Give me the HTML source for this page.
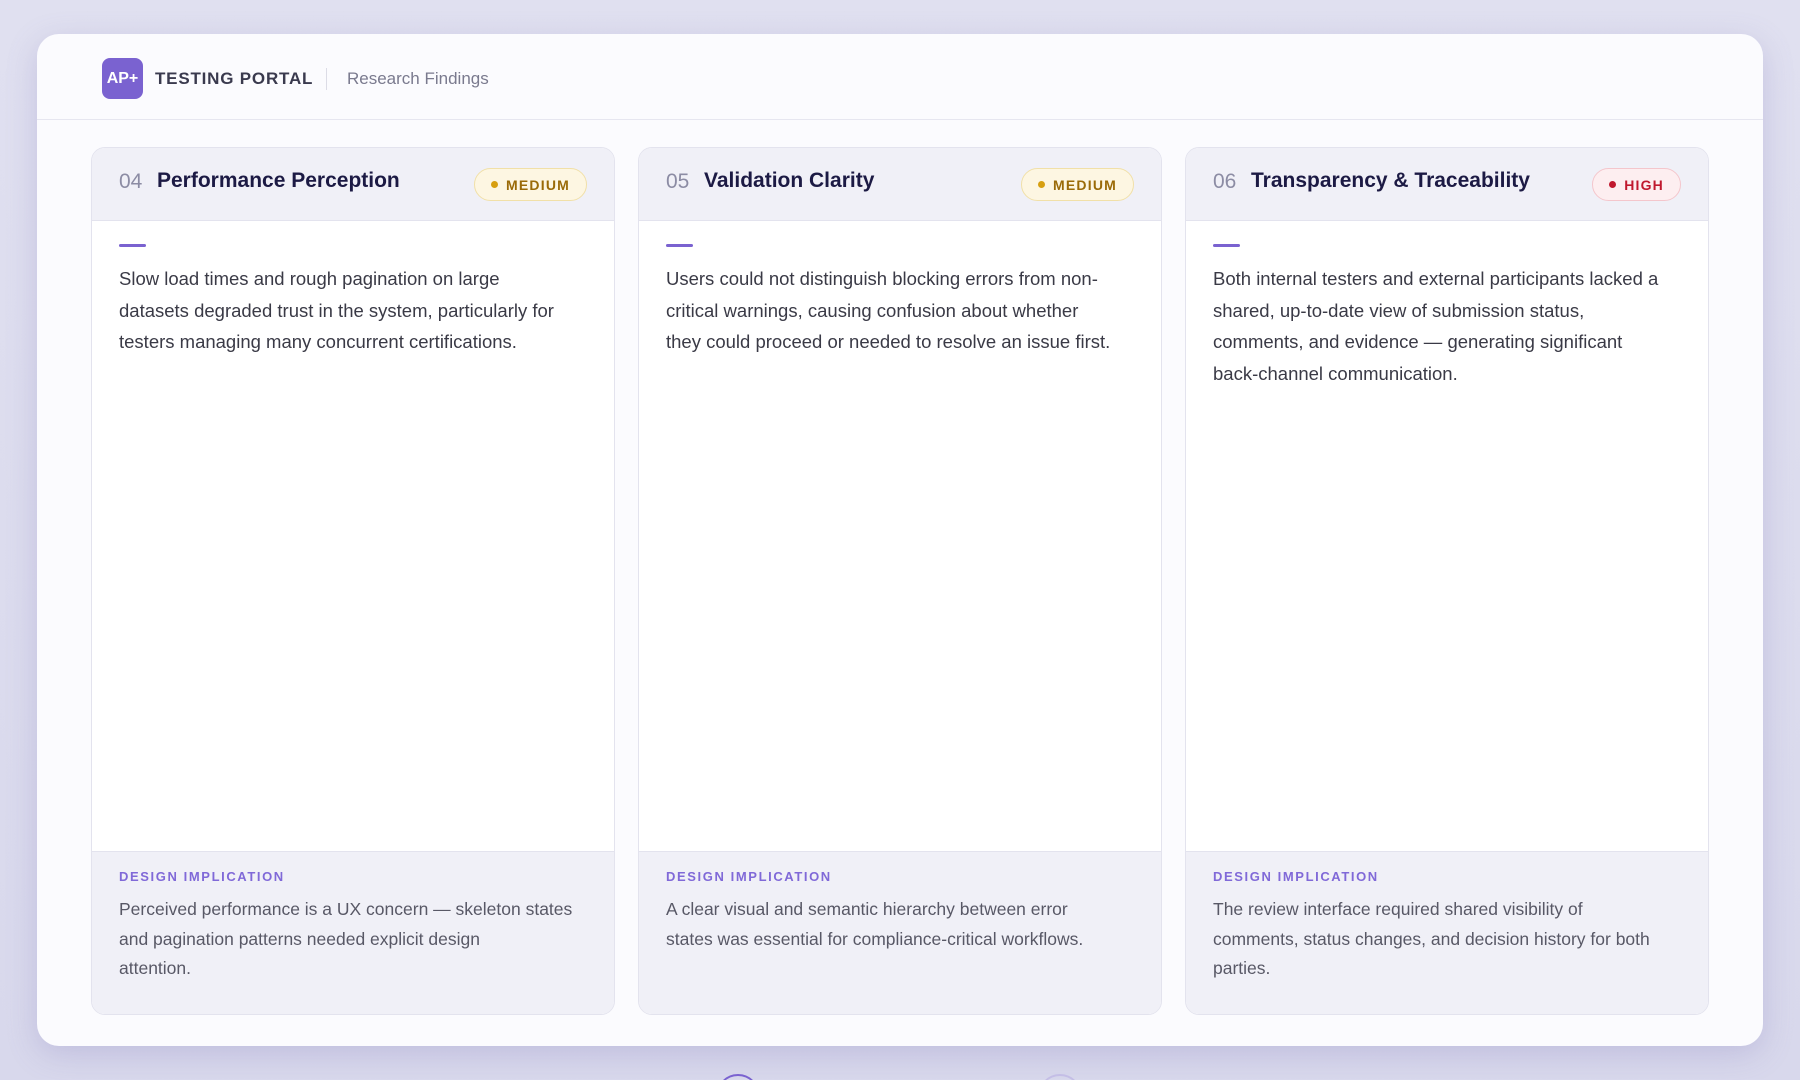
<!DOCTYPE html>
<html><head><meta charset="utf-8"><style>
*{box-sizing:border-box;margin:0;padding:0}
html,body{width:1800px;height:1080px;overflow:hidden}
body{background:linear-gradient(180deg,#e0e0f0 0%,#d8d8ec 100%);font-family:"Liberation Sans",sans-serif;position:relative}
.frame{position:absolute;left:37px;top:34px;width:1726px;height:1012px;background:#fbfbfe;border-radius:22px;box-shadow:0 8px 30px rgba(120,110,180,.25)}
.hdr{height:86px;border-bottom:1px solid #e6e6f0;position:relative}
.logo{position:absolute;left:65px;top:24px;width:41px;height:41px;border-radius:8px;background:#7a62d0;color:#fff;font-weight:bold;font-size:16px;display:flex;align-items:center;justify-content:center}
.brand{position:absolute;left:118px;top:35px;font-size:17px;font-weight:bold;color:#3a3a4e;letter-spacing:.8px}
.sep{position:absolute;left:289px;top:34px;width:1px;height:22px;background:#dcdce6}
.sub{position:absolute;left:310px;top:35px;font-size:17px;color:#7a7a8e}
.card{position:absolute;top:113px;width:524px;height:868px;border:1px solid #e3e3ee;border-radius:14px;background:#fff;overflow:hidden}
.ch{height:73px;background:#f0f0f7;border-bottom:1px solid #e3e3ee;position:relative}
.num{position:absolute;left:27px;top:22px;font-size:21px;color:#8c8ca4}
.tit{position:absolute;left:65px;top:21px;font-size:21px;font-weight:bold;color:#1c1a44}
.badge{position:absolute;right:27px;top:20px;height:33px;padding:0 16px;border-radius:17px;font-size:14px;font-weight:bold;letter-spacing:1.2px;display:flex;align-items:center;gap:8px}
.badge i{width:7px;height:7px;border-radius:50%;display:block}
.med{background:#fdf6e2;border:1.5px solid #f1e0a8;color:#9a6a08}.med i{background:#d79f10}
.high{background:#fdeef0;border:1.5px solid #f4c6cc;color:#c0182e}.high i{background:#c0182e}
.bar{position:absolute;left:27px;top:96px;width:27px;height:3px;border-radius:2px;background:#7a62d0}
.body{position:absolute;left:27px;top:115px;width:490px;font-size:18.5px;line-height:31.6px;color:#3a3a46;white-space:nowrap}
.ft{position:absolute;left:0;bottom:0;width:100%;height:163px;background:#f0f0f7;border-top:1px solid #e3e3ee;padding:17px 27px}
.lab{font-size:13px;font-weight:bold;letter-spacing:1.6px;color:#8069d8}
.ftx{margin-top:11px;font-size:17.5px;line-height:29.6px;color:#585866;white-space:nowrap}
.dot{position:absolute;top:1074px;width:44px;height:44px;border-radius:50%;border:2.5px solid #7a62d0}
</style></head><body>
<div class="frame">
<div class="hdr"><div class="logo">AP+</div><div class="brand">TESTING PORTAL</div><div class="sep"></div><div class="sub">Research Findings</div></div>
<div class="card" style="left:54px"><div class="ch"><span class="num">04</span><span class="tit">Performance Perception</span><span class="badge med"><i></i>MEDIUM</span></div><div class="bar"></div>
<div class="body">Slow load times and rough pagination on large<br>datasets degraded trust in the system, particularly for<br>testers managing many concurrent certifications.</div>
<div class="ft"><div class="lab">DESIGN IMPLICATION</div><div class="ftx">Perceived performance is a UX concern — skeleton states<br>and pagination patterns needed explicit design<br>attention.</div></div></div>
<div class="card" style="left:601px"><div class="ch"><span class="num">05</span><span class="tit">Validation Clarity</span><span class="badge med"><i></i>MEDIUM</span></div><div class="bar"></div>
<div class="body">Users could not distinguish blocking errors from non-<br>critical warnings, causing confusion about whether<br>they could proceed or needed to resolve an issue first.</div>
<div class="ft"><div class="lab">DESIGN IMPLICATION</div><div class="ftx">A clear visual and semantic hierarchy between error<br>states was essential for compliance-critical workflows.</div></div></div>
<div class="card" style="left:1148px"><div class="ch"><span class="num">06</span><span class="tit">Transparency &amp; Traceability</span><span class="badge high"><i></i>HIGH</span></div><div class="bar"></div>
<div class="body">Both internal testers and external participants lacked a<br>shared, up-to-date view of submission status,<br>comments, and evidence — generating significant<br>back-channel communication.</div>
<div class="ft"><div class="lab">DESIGN IMPLICATION</div><div class="ftx">The review interface required shared visibility of<br>comments, status changes, and decision history for both<br>parties.</div></div></div>
</div>
<div class="dot" style="left:716px"></div>
<div class="dot" style="left:1038px;border-color:#c4bee6"></div>
</body></html>
